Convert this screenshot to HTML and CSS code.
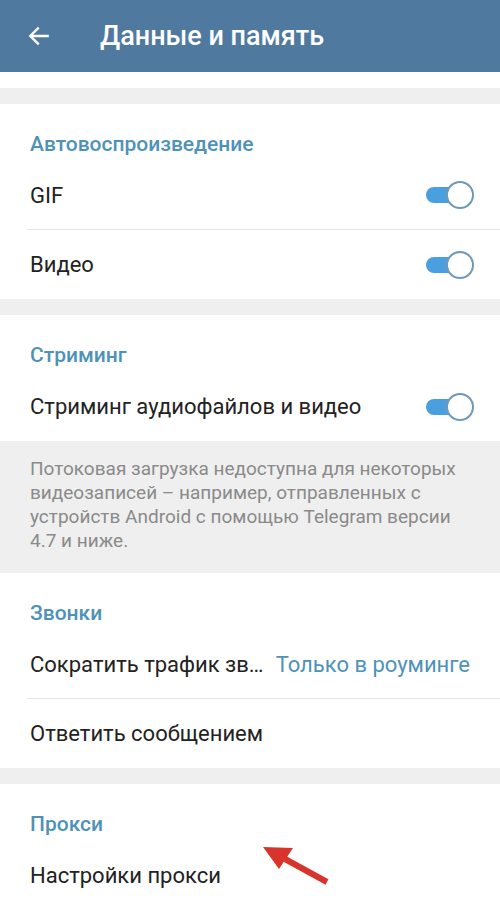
FILE: index.html
```html
<!DOCTYPE html>
<html lang="ru">
<head>
    <meta charset="UTF-8">
    <meta name="viewport" content="width=device-width, initial-scale=1.0">
    <title>Данные и память</title>
    <link rel="stylesheet" href="styles.css">
</head>
<body>
    <div class="topbar">
        <svg class="back" width="26" height="26" viewBox="0 0 24 24">
            <path d="M20 12H5M11 5l-7 7 7 7" fill="none" stroke="#fff" stroke-width="2.2" stroke-linecap="square"/>
        </svg>
        <h1>Данные и память</h1>
    </div>

    <div class="gap-top"></div>
    <div class="shade"></div>

    <div class="section">
        <div class="section-title">Автовоспроизведение</div>
        <div class="row line">
            <span>GIF</span>
            <span class="switch"></span>
        </div>
        <div class="row">
            <span>Видео</span>
            <span class="switch"></span>
        </div>
    </div>

    <div class="shade"></div>

    <div class="section">
        <div class="section-title">Стриминг</div>
        <div class="row">
            <span>Стриминг аудиофайлов и видео</span>
            <span class="switch"></span>
        </div>
    </div>

    <div class="info">
        Потоковая загрузка недоступна для некоторых видеозаписей – например, отправленных с устройств Android с помощью Telegram версии 4.7 и ниже.
    </div>

    <div class="section">
        <div class="section-title">Звонки</div>
        <div class="row line">
            <span>Сократить трафик зв…</span>
            <span class="value">Только в роуминге</span>
        </div>
        <div class="row">
            <span>Ответить сообщением</span>
        </div>
    </div>

    <div class="shade"></div>

    <div class="section proxy">
        <div class="section-title">Прокси</div>
        <div class="row">
            <span>Настройки прокси</span>
        </div>
        <svg class="pointer" width="80" height="50" viewBox="0 0 80 50">
            <path d="M66 36L24 13" stroke="#d8342c" stroke-width="6" stroke-linecap="butt"/>
            <polygon points="2,1 32,2 18,23" fill="#d8342c"/>
        </svg>
    </div>
</body>
</html>
```

FILE: styles.css
```css
body { margin: 0; background-color: #fff; font-family: Roboto, "Noto Sans", sans-serif; color: #222; overflow: hidden; }
.topbar { height: 72px; background-color: #5079a0; display: flex; align-items: center; padding-left: 26px; }
.topbar h1 { margin: 0 0 0 48px; color: #fff; font-size: 27px; font-weight: 500; }
.back { display: block; }
.gap-top { height: 16px; }
.shade { height: 16px; background-color: #efefef; }
.section { position: relative; }
.section-title { height: 57px; padding: 0 30px 5px; display: flex; align-items: flex-end; box-sizing: border-box; color: #4e92b8; font-size: 21px; font-weight: 500; }
.row { height: 69px; margin-left: 30px; padding-right: 30px; display: flex; align-items: center; justify-content: space-between; font-size: 22px; box-sizing: border-box; }
.row.line { border-bottom: 1px solid #e6e6e6; margin-left: 27px; padding-left: 3px; }
.switch { position: relative; width: 46px; height: 16px; background-color: #4a9fdf; border-radius: 8px; margin-right: -2px; }
.switch::after { content: ""; position: absolute; right: -2px; top: -6px; width: 24px; height: 24px; border-radius: 50%; background: #fff; border: 2px solid #6f98b6; }
.info { background-color: #efefef; color: #8a8a8a; font-size: 19px; line-height: 24px; padding: 16px 30px 20px; }
.value { color: #4e92b8; white-space: nowrap; }
.pointer { position: absolute; left: 261px; top: 62px; }
```
